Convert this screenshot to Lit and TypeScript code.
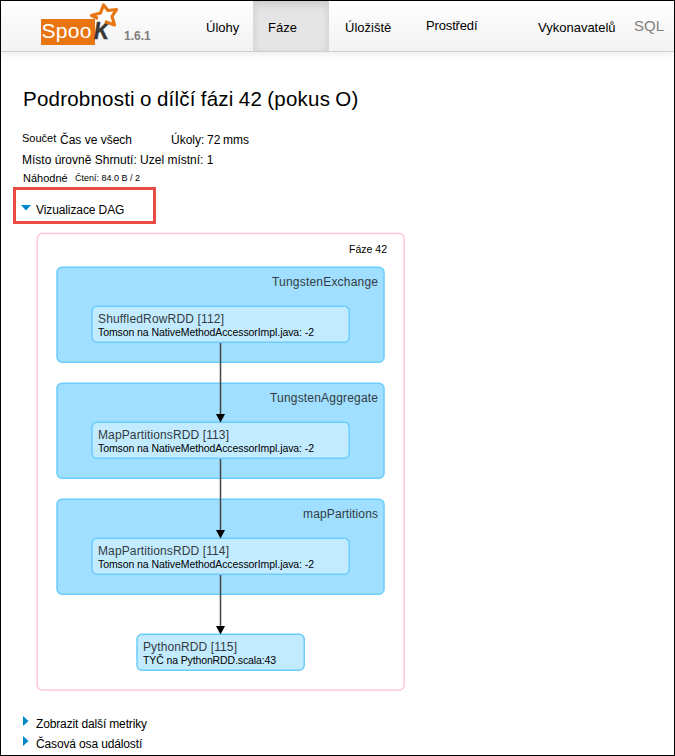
import { LitElement, html, svg, css } from "lit";
import { customElement } from "lit/decorators.js";

interface RddNode { x: number; y: number; w: number; name: string; nameW: number; site: string; siteW: number; }
interface Scope { y: number; name: string; nameW: number; }

const SITE = "Tomson na NativeMethodAccessorImpl.java: -2";
const SCOPES: Scope[] = [
  { y: 34, name: "TungstenExchange", nameW: 106 },
  { y: 150, name: "TungstenAggregate", nameW: 108 },
  { y: 266, name: "mapPartitions", nameW: 75 },
];
const NODES: RddNode[] = [
  { x: 55, y: 73, w: 258, name: "ShuffledRowRDD [112]", nameW: 126, site: SITE, siteW: 216 },
  { x: 55, y: 189, w: 258, name: "MapPartitionsRDD [113]", nameW: 131, site: SITE, siteW: 216 },
  { x: 55, y: 305, w: 258, name: "MapPartitionsRDD [114]", nameW: 131, site: SITE, siteW: 216 },
  { x: 100, y: 401, w: 168, name: "PythonRDD [115]", nameW: 94, site: "TYČ na PythonRDD.scala:43", siteW: 133 },
];

@customElement("dag-graph")
export class DagGraph extends LitElement {
  static styles = css`
    :host { display: block; width: 368px; height: 458px; }
    svg { display: block; overflow: visible; font-family: "Liberation Sans", Arial, sans-serif; }
    .stage { fill: #fff; stroke: #ffc8d4; stroke-width: 1.5; }
    .scope { fill: #a0dfff; stroke: #6bcdfb; stroke-width: 1.5; }
    .node { fill: #c3ebff; stroke: #6bcdfb; stroke-width: 1.5; }
    .edge { stroke: #444; stroke-width: 1.5; }
    .head { fill: #000; }
    .name { font-size: 12px; fill: #333b42; }
    .site { font-size: 10.5px; fill: #000; }
  `;
  render() {
    return html`<svg width="368" height="458" viewBox="0 0 368 458">
      <rect class="stage" x="0.25" y="0.5" width="367" height="456.5" rx="5"></rect>
      <text class="site" x="312" y="20" textLength="38">Fáze 42</text>
      ${SCOPES.map((s) => svg`
        <rect class="scope" x="20" y=${s.y + 0.25} width="327" height="95" rx="5"></rect>
        <text class="name" x=${341 - s.nameW} y=${s.y + 19} textLength=${s.nameW}>${s.name}</text>`)}
      ${NODES.map((n) => svg`
        <rect class="node" x=${n.x} y=${n.y + 0.25} width=${n.w - 0.75} height="36" rx="5"></rect>
        <text class="name" x=${n.x + 6} y=${n.y + 17} textLength=${n.nameW}>${n.name}</text>
        <text class="site" x=${n.x + 6} y=${n.y + 30} textLength=${n.siteW}>${n.site}</text>`)}
      ${NODES.slice(1).map((n, i) => svg`
        <line class="edge" x1="183.5" x2="183.5" y1=${NODES[i].y + 37} y2=${n.y - 7}></line>
        <path class="head" d="M179 ${n.y - 8}h9l-4.5 8.5z"></path>`)}
    </svg>`;
  }
}

@customElement("app-root")
export class AppRoot extends LitElement {
  static styles = css`
    :host { display: block; box-sizing: border-box; width: 675px; height: 756px; border: 1px solid #000;
      background: #fff; overflow: hidden; color: #000; font: 12px/16px "Liberation Sans", Arial, sans-serif; white-space: nowrap; }
    .bar { display: flex; height: 50px; border-bottom: 1px solid #cfcfcf; font-size: 13px;
      background: linear-gradient(#fff, #f2f2f2); box-shadow: 0 1px 8px rgba(0, 0, 0, 0.1); }
    .brand { display: flex; width: 183px; padding-left: 40px; flex: none; box-sizing: border-box; }
    .logo { flex: none; width: 79px; height: 50px; font-size: 21px; }
    .mark { font-weight: bold; font-style: italic; font-size: 24px; fill: #3a3734; stroke: #3a3734; stroke-width: 0.6px; }
    .ver { margin: 27px 0 0 4px; font-weight: bold; font-size: 12px; color: #808080; }
    .tab { box-sizing: border-box; flex: none; padding-top: 19px; }
    .t1 { width: 69px; padding-left: 22px; }
    .t2 { width: 76px; padding-left: 15px; background: #e5e5e5; box-shadow: inset 0 3px 8px rgba(0, 0, 0, 0.125); }
    .t3 { width: 81px; padding-left: 16px; }
    .t4 { width: 112px; padding: 17px 0 0 16px; letter-spacing: -0.15px; }
    .t5 { width: 112px; padding-left: 16px; }
    .t6 { padding-top: 17px; font-size: 15px; color: #808080; }
    h1 { margin: 35px 0 0 22px; font-size: 20.5px; line-height: 24px; font-weight: normal; letter-spacing: 0.22px; word-spacing: -0.7px; }
    .row { display: flex; margin-left: 21px; height: 20px; align-items: center; }
    .first { margin-top: 19px; }
    .sum { font-size: 11px; margin-bottom: 4px; width: 38px; }
    .time { width: 111px; }
    .tasks { word-spacing: -0.7px; }
    .rand { height: 15px; font-size: 11px; }
    .rand span { width: 53px; padding-left: 1px; box-sizing: border-box; }
    .rand small { font-size: 9px; }
    .callout { box-sizing: border-box; width: 143px; height: 37px; margin: 2px 0 0 12px; border: 3px solid #e84c45;
      display: flex; align-items: center; padding: 8px 0 0 5px; }
    .callout svg, .more svg { flex: none; }
    .callout svg { margin-bottom: 4px; }
    .callout span { margin-left: 5px; letter-spacing: -0.1px; }
    dag-graph { margin: 9px 0 0 36px; }
    .more { display: flex; height: 20px; margin-left: 22px; align-items: center; letter-spacing: -0.14px; }
    .more span { margin: 5px 0 0 7px; }
    .links { margin-top: 20px; }
  `;
  render() {
    return html`
      <header class="bar">
        <div class="brand">
          <svg class="logo" viewBox="0 0 79 50">
            <rect y="18" width="54" height="26" fill="#e87511"></rect>
            <text x="0.500" y="37" fill="#fff" textLength="50">Spoo</text>
            <text class="mark" x="53" y="38" textLength="15" lengthAdjust="spacingAndGlyphs">K</text>
            <path d="M58 18L50.500 14.500L59.500 12L62.500 4L67 9.500L75.500 8.500L71 15.500L73.500 24L65.500 20.500L60 22Z" fill="#fff"></path>
            <path d="M57 17.500L50.500 14.500L59.500 12L62.500 4L67 9.500L75.500 8.500L71 15.500L73.500 24L64 20.500" fill="none" stroke="#e87511" stroke-width="3.200" stroke-linejoin="round"></path>
          </svg>
          <span class="ver">1.6.1</span>
        </div>
        <div class="tab t1">Úlohy</div>
        <div class="tab t2">Fáze</div>
        <div class="tab t3">Úložiště</div>
        <div class="tab t4">Prostředí</div>
        <div class="tab t5">Vykonavatelů</div>
        <div class="tab t6">SQL</div>
      </header>
      <h1>Podrobnosti o dílčí fázi 42 (pokus O)</h1>
      <div class="row first"><span class="sum">Součet</span><span class="time">Čas ve všech</span><span class="tasks">Úkoly: 72 mms</span></div>
      <div class="row">Místo úrovně Shrnutí: Uzel místní: 1</div>
      <div class="row rand"><span>Náhodné</span><small>Čtení: 84.0 B / 2</small></div>
      <div class="callout"><svg width="10" height="6"><path d="M0 0h10L5 5.500z" fill="#0088cc"></path></svg><span>Vizualizace DAG</span></div>
      <dag-graph></dag-graph>
      <div class="links">
        ${["Zobrazit další metriky", "Časová osa událostí"].map((t) => html`
          <div class="more"><svg width="6" height="10"><path d="M0 0l5.500 5L0 10z" fill="#0088cc"></path></svg><span>${t}</span></div>`)}
      </div>`;
  }
}
